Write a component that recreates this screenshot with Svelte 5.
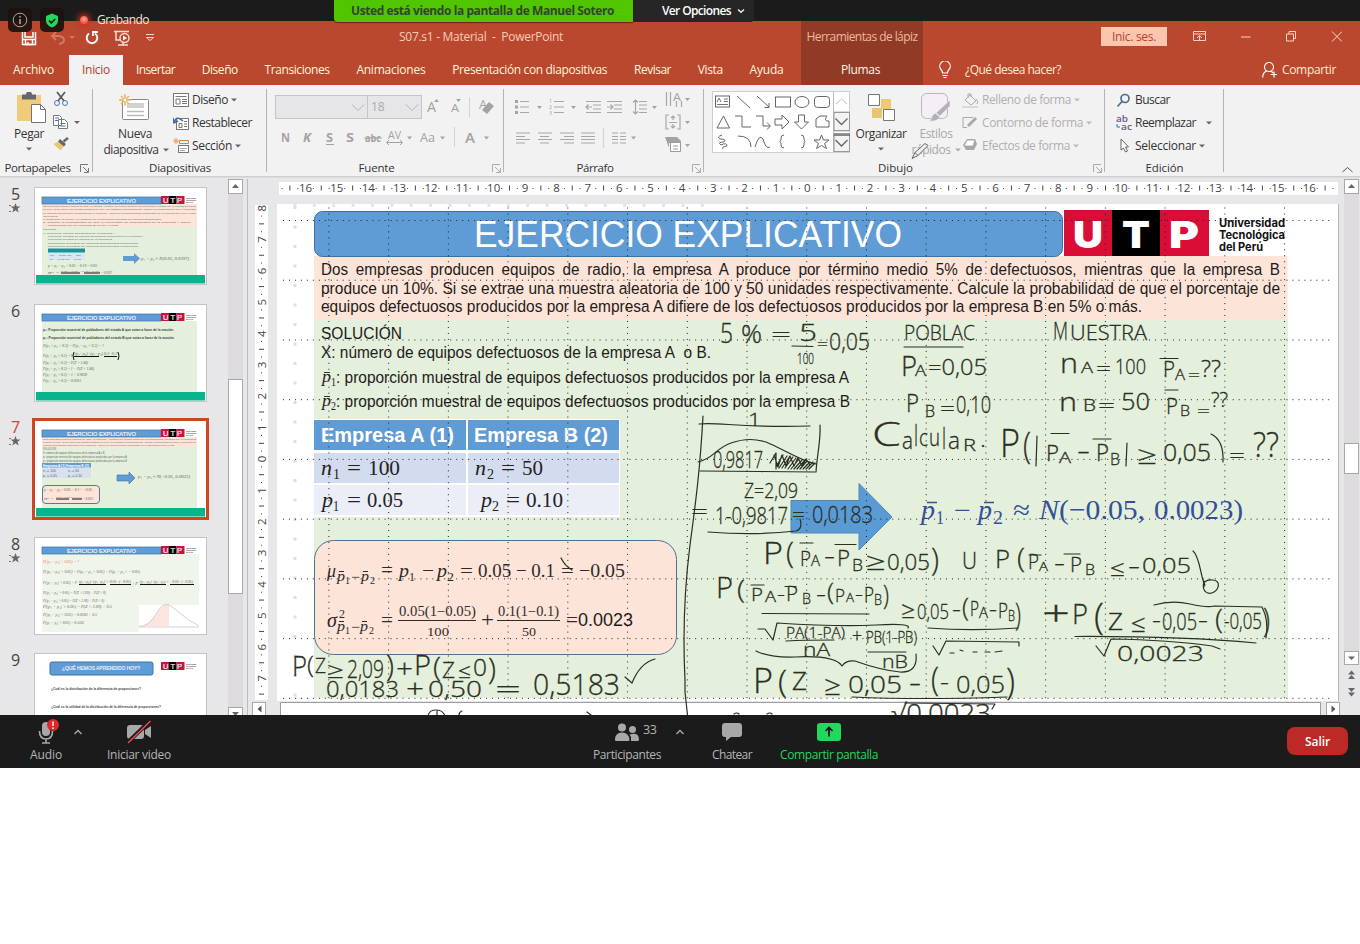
<script>
  // Stretches or tightens the tracking of a label so that it fills the given width.
  function fit(node, width) {
    node.style.letterSpacing = '0px';
    const natural = node.getBoundingClientRect().width;
    const spacing = (width - natural) / node.textContent.length;
    node.style.letterSpacing = spacing + 'px';
  }

  const tabs = [
    ['Insertar', 39], ['Diseño', 36], ['Transiciones', 65], ['Animaciones', 69],
    ['Presentación con diapositivas', 155], ['Revisar', 37], ['Vista', 25], ['Ayuda', 34]
  ];

  const unit = 31.37;
  const range = (a, b) => Array.from({ length: b - a + 1 }, (_, i) => a + i);
  const hNumbers = range(-16, 16);
  const hQuarters = range(-67, 67).filter((q) => q % 4 !== 0);
  const vNumbers = range(-8, 7);
  const vQuarters = range(-31, 30).filter((q) => q % 4 !== 0);
  const gridX = range(0, 16).map((i) => 328.9 + i * 59.73);
  const gridY = range(0, 8).map((i) => 220.5 + i * 59.73);

  // Pen annotations: text, left, baseline, width, size
  const ink = [
    ['5', 720, 343, 13, 27], ['%', 741, 343, 21, 26], ['=', 771, 342, 20, 20], ['5', 799, 341, 18, 23],
    ['100', 797, 364, 17, 15], ['=', 817, 350, 11, 16], ['0,05', 829, 350, 41, 23],
    ['POBLAC', 904, 340, 71, 21], ['P', 901, 376, 16, 28], ['A', 915, 376, 11, 15], ['=0,05', 928, 375, 59, 22],
    ['P', 906, 412, 13, 25], ['B', 925, 417, 10, 16], ['=', 940, 415, 15, 18], ['0,10', 956, 413, 35, 23],
    ['M', 1053, 339, 15, 24], ['UESTRA', 1070, 340, 77, 20],
    ['n', 1060, 373, 18, 27], ['A', 1081, 373, 12, 15], ['=', 1096, 375, 15, 18], ['100', 1115, 374, 31, 20],
    ['P', 1163, 377, 12, 22], ['A', 1175, 380, 10, 14], ['=', 1188, 381, 12, 16], ['??', 1201, 377, 20, 24],
    ['n', 1059, 411, 18, 25], ['B', 1083, 411, 13, 16], ['=', 1098, 412, 17, 18], ['50', 1121, 410, 29, 23],
    ['P', 1166, 414, 12, 22], ['B', 1180, 416, 10, 14], ['=', 1197, 417, 13, 16], ['??', 1211, 407, 17, 20],
    ['C', 872, 446, 29, 33], ['a', 902, 449, 11, 23], ['l', 914, 446, 4, 29], ['c', 919, 446, 9, 23], ['u', 929, 446, 11, 23], ['l', 942, 449, 4, 30], ['a', 948, 449, 12, 23], ['R', 963, 451, 13, 17], ['.', 980, 447, 6, 22],
    ['P', 1000, 457, 20, 38], ['(', 1023, 458, 8, 36], ['P', 1046, 461, 13, 22], ['A', 1059, 463, 12, 15], ['-', 1077, 460, 13, 25],
    ['P', 1096, 461, 13, 23], ['B', 1110, 465, 10, 16], ['≥', 1137, 464, 20, 25],
    ['0,05', 1163, 461, 48, 23], ['=', 1229, 463, 16, 20], ['??', 1253, 457, 26, 35],
    ['1', 748, 426, 13, 19], ['0,9817', 713, 468, 50, 23],
    ['Z=2,09', 744, 498, 54, 20], ['=', 691, 519, 17, 22], ['1-0,9817', 715, 524, 73, 23], ['=', 792, 522, 13, 20], ['0,0183', 812, 523, 61, 24],
    ['P', 763, 564, 20, 32], ['(', 786, 563, 8, 30], ['P', 800, 566, 11, 20], ['A', 811, 566, 9, 14], ['-', 824, 564, 11, 24],
    ['P', 837, 566, 13, 22], ['B', 852, 571, 11, 17], ['≥', 866, 570, 20, 24], ['0,05', 887, 570, 43, 22], [')', 931, 570, 8, 32],
    ['U', 962, 569, 15, 23], ['P', 995, 568, 15, 26], ['(', 1017, 568, 8, 27], ['P', 1028, 569, 11, 20], ['A', 1039, 571, 9, 13], ['-', 1054, 571, 11, 24],
    ['P', 1070, 572, 12, 20], ['B', 1085, 575, 10, 14], ['≤', 1110, 576, 15, 22], ['-', 1128, 574, 12, 23], ['0,05', 1142, 573, 49, 21],
    ['P', 716, 598, 17, 30], ['(', 737, 598, 8, 26], ['P', 751, 601, 12, 18], ['A', 765, 602, 11, 14], ['-', 777, 601, 8, 20], ['P', 786, 601, 12, 20], ['B', 802, 604, 9, 15],
    ['-', 816, 602, 10, 22], ['(', 827, 600, 7, 23], ['P', 835, 602, 10, 19], ['A', 846, 602, 8, 13], ['-', 855, 601, 8, 20], ['P', 864, 602, 10, 20], ['B', 874, 605, 8, 15], [')', 883, 605, 6, 27],
    ['≥', 901, 618, 14, 23], ['0,05', 917, 619, 32, 21], ['-', 952, 617, 9, 22], ['(', 962, 616, 7, 25], ['P', 970, 616, 9, 20], ['A', 979, 618, 9, 14], ['-', 989, 617, 8, 22], ['P', 998, 618, 10, 21], ['B', 1008, 621, 7, 14], [')', 1015, 625, 6, 31],
    ['PA(1-PA)', 786, 638, 59, 15], ['+', 852, 643, 10, 20], ['PB(1-PB)', 866, 643, 51, 17],
    ['nA', 803, 656, 27, 18], ['nB', 882, 668, 26, 19],
    ['P', 753, 693, 20, 35], ['(', 778, 692, 9, 31], ['Z', 792, 690, 15, 25], ['≥', 824, 695, 17, 27], ['0,05', 848, 693, 54, 24], ['-', 909, 692, 12, 25],
    ['(', 931, 691, 8, 33], ['-', 940, 690, 9, 22], ['0,05', 956, 693, 49, 24], [')', 1006, 694, 9, 36],
    ['√0,0023', 891, 722, 100, 25],
    ['+', 1042, 626, 28, 34], ['P', 1072, 624, 16, 28], ['(', 1094, 629, 10, 36], ['Z', 1108, 630, 15, 24], ['≤', 1131, 632, 15, 24], ['-', 1152, 628, 9, 22], ['0,05', 1162, 630, 35, 23], ['-', 1198, 628, 10, 22], ['(', 1215, 629, 8, 28], ['-0,05', 1224, 629, 38, 22], [')', 1263, 632, 7, 33],
    ['0,0023', 1117, 661, 87, 20],
    ['P', 292, 676, 15, 28], ['(', 307, 673, 7, 24], ['Z', 315, 673, 11, 20], ['≥', 327, 678, 17, 22], ['2,09', 347, 678, 37, 26], [')', 386, 676, 8, 30], ['+', 396, 678, 17, 26],
    ['P', 414, 675, 17, 27], ['(', 433, 677, 8, 27], ['Z', 442, 678, 13, 22], ['≤', 458, 678, 13, 20], ['0', 473, 676, 14, 23], [')', 488, 679, 8, 30],
    ['0,0183', 326, 697, 73, 22], ['+', 406, 698, 18, 25], ['0,50', 428, 697, 54, 22], ['=', 495, 698, 26, 26], ['0,5183', 533, 695, 87, 30]
  ];

  // Straight and curved pen marks: fraction bars, roots, brackets, hatching
  const strokes = [
    'M792 346L813 346.500', 'M904 347H963', 'M1160 358.500H1178', 'M1165 390H1178', 'M1051 433.500H1069', 'M1093 439H1111',
    'M1211 434q13 6 12 28', 'M1037 436L1036 466', 'M1127 443L1126 466',
    'M703 416C700 470 696 500 690 545C683 600 683 640 685 680V692L687.500 715', 'M699 424C720 422 740 428 810 426', 'M820 425C821 440 817 455 816 472', 'M700 471L760 471.500L815 472',
    'M698 462C713 459 716 448 731 443S755 439 766 442C781 448 801 461 816 464', 'M708 532C735 534 770 534 796 531Q803 529 800 519',
    'M770 463l6-10l0 16M776 467l7-12M779 468l8-12M782 468l8-12M785 468l8-11M788 469l8-11M791 469l8-10M794 469l8-9M797 469l8-9M800 469l7-8M803 469l7-7M806 469l7-7M809 469l6-6M774 455l4 12l4-12l4 11l4-10l4 10l4-8l4 8l4-7l4 6',
    'M800 543H813', 'M835 544.500H856', 'M1029 555H1041', 'M1064 554H1080', 'M751 585H764', 'M785 586.500H796', 'M1193 551C1200 556 1201 580 1205 585M1204 581c-3 12 5 14 10 11s7-11-1-12s-10 3-9 7',
    'M762 613.500L869 614', 'M928 628C955 630 990 630 1018 628', 'M933 646l6 9l7-14l73 1v4', 'M950 653l4 0M960 650l3 1M973 652l4 0M985 652l5 0M995 652l7-1',
    'M758 629l7 0l8 11l4-17Q840 627 876 625T908 628', 'M786 641Q805 640 834 640', 'M868 652H906',
    'M756 651Q770 658 795 657Q835 655 842 666Q846 660 855 661Q880 670 900 672Q918 673 916 654',
    'M852 697Q920 700 1007 697', 'M905 703L995 704l-3 5', 'M1154 605Q1172 600 1190 604T1214 606L1262 607Q1269 620 1266 638', 'M1075 636.500Q1180 636 1256 643',
    'M1096 646l8 10l7-17Q1170 640 1212 646l8 3', 'M625 677l7 6Q640 663 655 659', 'M561 558q4 8 11 12',
    'M428 716q1-6 8-6t9 6M437 711v5', 'M459 715q0-3 3-4', 'M587 712l4 3', 'M734 714q3-2 5 0M767 714q3-2 5 0'
  ];

  const thumbs = [
    { n: 5, kind: 'a', star: true },
    { n: 6, kind: 'b', star: false },
    { n: 7, kind: 'c', star: true },
    { n: 8, kind: 'd', star: true },
    { n: 9, kind: 'e', star: false }
  ];
</script>

{#snippet st(text, x, y, w, size, cls = '')}
  <text class={cls} {x} {y} font-size={size} textLength={w} lengthAdjust="spacingAndGlyphs">{text}</text>
{/snippet}

{#snippet caret(tone = '#666')}
  <svg class="caret" width="6" height="4" viewBox="0 0 6 4"><path d="M0 .5h6L3 3.500z" fill={tone} /></svg>
{/snippet}

{#snippet launcher(tone)}
  <svg class="launcher" width="9" height="9" viewBox="0 0 9 9" fill="none" stroke={tone}><path d="M.5 8V.5H8M3 3l5 5M8.500 4v4.500H4" /></svg>
{/snippet}

{#snippet thumbHead()}
  <rect x="8" y="10" width="119" height="7" fill="#5f9bd5" stroke="#3973ad" stroke-width=".7" />
  {@render st('EJERCICIO EXPLICATIVO', 33, 15.800, 69, 5.800, 'tw')}
  {@render thumbLogo()}
{/snippet}

{#snippet thumbLogo()}
  <rect x="127" y="9" width="8" height="8" fill="#c8143e" /><rect x="135" y="9" width="7.500" height="8" fill="#000" /><rect x="142.500" y="9" width="8" height="8" fill="#c8143e" />
  {@render st('U T P', 129, 15.500, 19, 6.500, 'tw')}
  {@render st('Universidad', 152, 12, 10, 2.500, 'tt dark')}
  {@render st('Tecnológica', 152, 14.200, 10, 2.500, 'tt dark')}
  {@render st('del Perú', 152, 16.400, 7, 2.500, 'tt dark')}
{/snippet}

<div class="screen">
  <header>
    <div class="share-strip">
      <div class="banner"><span use:fit={263}>Usted está viendo la pantalla de Manuel Sotero</span></div>
      <div class="options">
        <span use:fit={69}>Ver Opciones</span>
        <svg width="8" height="6" viewBox="0 0 8 6" fill="none" stroke="#eee" stroke-width="1.400"><path d="M1 1.500l3 2.700l3-2.700" /></svg>
      </div>
    </div>
    <div class="zoom-badges">
      <i><svg width="16" height="16" viewBox="0 0 16 16" fill="none" stroke="#aaa"><circle cx="8" cy="8" r="6.800" /><path d="M8 7v5M8 4v1.500" stroke-width="1.500" /></svg></i>
      <i><svg width="14" height="15" viewBox="0 0 14 15"><path d="M7 .5l6 2.500v4.500C13 11 10 13.500 7 14.500C4 13.500 1 11 1 7.500V3z" fill="#22d65f" /><path d="M4 7.500l2.300 2.300L10.300 6" fill="none" stroke="#111" stroke-width="1.600" /></svg></i>
      <b></b><span use:fit={52}>Grabando</span>
    </div>
    <div class="titlebar">
      <div class="main">
        <div class="row-title">
          <svg width="160" height="22" viewBox="0 27 160 22" fill="none" stroke="#fff" stroke-width="1.500">
            <path d="M22.500 32v12.500h13V32M25 32v5h8v-5" /><path d="M22 39.500h13.500M25.500 40v4.500h7V40M28 42v3" />
            <path d="M56 32l-4 4l4 4M52 36h7q5 1 5 4t-5 4" stroke="#cf7a63" stroke-width="2" /><path d="M69 36h6l-3 3z" fill="#cf7a63" stroke="none" />
            <path d="M89 33.500a5.300 5.300 0 1 0 6 0" stroke-width="2" /><path d="M93 36v-4h5" stroke-width="1.800" />
            <path d="M114 31.500h15M116 32v8h5M118 45h10M123 42v3" stroke="#f8dccd" /><circle cx="124.500" cy="38" r="4.500" stroke="#f8dccd" /><path d="M123 35.500v5l4-2.500z" fill="#fff" stroke="none" />
            <path d="M146 34.500h8M146.500 37.500h7l-3.500 3z" stroke="#ffd3c0" stroke-width="1" />
          </svg>
          <span class="doc" use:fit={164}>S07.s1 - Material&nbsp; - &nbsp;PowerPoint</span>
        </div>
        <nav>
          <span class="file"><span use:fit={41}>Archivo</span></span>
          <span class="active"><span use:fit={28}>Inicio</span></span>
          <div class="tabs">{#each tabs as [name, w]}<span style:width="{w}px"><span use:fit={w}>{name}</span></span>{/each}</div>
        </nav>
      </div>
      <div class="tools"><div><span use:fit={111}>Herramientas de lápiz</span></div><div class="pl"><span use:fit={39}>Plumas</span></div></div>
      <div class="right">
        <div class="win">
          <span class="login"><span use:fit={44}>Inic. ses.</span></span>
          <svg width="150" height="14" viewBox="1192 30 150 14" fill="none" stroke="#ffd3c4"><path d="M1193.500 31.500h12v9h-12zM1193 34h13M1199.500 40v-4M1197 38l2.500-2.500l2.500 2.500M1241 37h9.500M1286.500 34h7v7h-7zM1289 34v-2.500h6.500v7H1294M1332 31.500l10 10M1342 31.500l-10 10" /></svg>
        </div>
        <div class="ask">
          <svg width="14" height="18" viewBox="0 0 14 18" fill="none" stroke="#fff" stroke-width="1.200"><path d="M4.500 12q0-2-1.500-3.500A5.200 5.200 0 1 1 11 8.500Q9.500 10 9.500 12zM4.500 14.500h5M5.500 16.500h3" /></svg>
          <span use:fit={96}>¿Qué desea hacer?</span>
          <svg class="person" width="16" height="16" viewBox="0 0 16 16" fill="none" stroke="#fff" stroke-width="1.200"><circle cx="7" cy="5" r="4.500" /><path d="M.7 15.500q0-5 4-6.500M9 9l2 2M8.500 12.500h6.500M12 9.500v6" /></svg>
          <span use:fit={54}>Compartir</span>
        </div>
      </div>
    </div>
  </header>

  <section class="ribbon">
    <div class="group clip">
      <div class="body">
        <div class="big paste">
          <svg width="30" height="32" viewBox="0 0 30 32"><rect x="0" y="3" width="24" height="26" fill="#f0ca7d" /><path d="M5 2.500h4a3 3 0 0 1 6 0h4v5H5z" fill="#68666a" /><path d="M14.500 12.500h9l5 5v13h-14z" fill="#fff" stroke="#757275" /><path d="M23.500 12.500v5h5" fill="none" stroke="#757275" /></svg>
          <span use:fit={30}>Pegar</span>{@render caret()}
        </div>
        <svg class="side" width="32" height="62" viewBox="53 91 32 62" fill="none"><path d="M57 92l7 9M65 92l-7 9" stroke="#58565a" stroke-width="1.700" /><circle cx="57" cy="103" r="2.500" stroke="#4b76a5" /><circle cx="65" cy="103" r="2.500" stroke="#4b76a5" /><path d="M53.500 115.500h6l2 2v8h-8zM58.500 119.500h6l3 3v6h-9z" fill="#fff" stroke="#777" /><path d="M55 118h4M55 120.500h3M60.500 123.500h5M60.500 126h5" stroke="#4b76a5" /><path d="M74 121h6l-3 3z" fill="#666" /><path d="M53.500 144l7 6.500l4-5l-6-4z" fill="#e8c772" /><path d="M58 141.500l6 5l2-2.500l-6-5z" fill="#666" /><path d="M63.500 141.500l4.500-3.500" stroke="#666" stroke-width="2.500" /></svg>
      </div>
      <footer><span use:fit={66}>Portapapeles</span>{@render launcher('#777')}</footer>
    </div>

    <div class="group slides">
      <div class="body">
        <div class="big new">
          <svg width="32" height="28" viewBox="0 0 32 28" fill="none"><rect x="3.500" y="5.500" width="26" height="20" fill="#fff" stroke="#888" rx="1" /><rect x="8" y="9" width="17" height="5" fill="#d2d2d2" /><path d="M8 17.500h17M8 21.500h17" stroke="#bbb" stroke-width="1.300" /><path d="M6 0v12M0 6h12M2 2l8 8M10 2l-8 8" stroke="#e5b95f" stroke-width="1.400" /><circle cx="6" cy="6" r="2" fill="#fff" stroke="#e5b95f" /></svg>
          <span use:fit={34}>Nueva</span><div class="line"><span use:fit={55}>diapositiva</span>{@render caret()}</div>
        </div>
        <div class="list">
          <div><svg width="16" height="15" viewBox="0 0 16 15" fill="none" stroke="#777"><rect x=".5" y=".5" width="15" height="13" fill="#fff" /><path d="M2.500 3.500h11M3 6h4v5H3zM9 6.500h5M9 8.500h5M9 10.500h5" /></svg><span use:fit={36}>Diseño</span>{@render caret()}</div>
          <div><svg width="16" height="15" viewBox="0 0 16 15" fill="none" stroke="#777"><rect x="3.500" y="2.500" width="12" height="11" fill="#fff" /><path d="M6 7.500h3v4H6zM11 5.500h3M11 8h3M11 10.500h3" /><path d="M1 6q3-7 9-1M0 2l1 5l4-2" stroke="#3b6ba6" stroke-width="1.500" /></svg><span use:fit={60}>Restablecer</span></div>
          <div><svg width="16" height="15" viewBox="0 0 16 15" fill="none" stroke="#777"><path d="M6.500 2.500h9v3h-9z" stroke="#c98147" /><rect x="5.500" y="7.500" width="10" height="7" fill="#fff" /><path d="M7 10.500h7M7 12.500h5" stroke="#aaa" /><path d="M3 0v6M0 3h6M1 1l4 4M5 1L1 5" stroke="#e6a45f" /></svg><span use:fit={40}>Sección</span>{@render caret()}</div>
        </div>
      </div>
      <footer><span use:fit={62}>Diapositivas</span></footer>
    </div>

    <div class="group font">
      <div class="body col">
        <div class="combo-row">
          <div class="combo name"><svg width="14" height="9" viewBox="0 0 14 9" fill="none" stroke="#b5b3b5"><path d="M1 1.500l6 6l6-6" /></svg></div>
          <div class="combo size"><span>18</span><svg width="14" height="9" viewBox="0 0 14 9" fill="none" stroke="#b5b3b5"><path d="M1 1.500l6 6l6-6" /></svg></div>
          <svg width="74" height="24" viewBox="424 95 74 24" class="gi">{@render st('A', 427, 112, 9, 14)}<path d="M434 102l2.500-3l2.500 3zM456 99h5l-2.500 3z" />{@render st('A', 451, 112, 8, 11.500)}<path d="M469.500 97v20" stroke="#d4d2d4" />{@render st('A', 479, 109, 8, 12)}<path d="M482 110l7-8l5 4l-7 8z" /></svg>
        </div>
        <svg class="fmt gi" width="222" height="26" viewBox="272 125 222 26">
          <g font-weight="bold">{@render st('N', 281, 142, 9, 12.500)}<g font-style="italic">{@render st('K', 303, 142, 8, 12.500)}</g>{@render st('S', 326, 142, 7, 12.500)}{@render st('S', 346, 142, 8, 13)}{@render st('abc', 365, 142, 16, 11)}</g>
          <path d="M326 144.500h8M364 138h18M387 142.500h15M389 140l-2.500 2.500l2.500 2.500M400 140l2.500 2.500l-2.500 2.500" fill="none" stroke="#a5a1a5" />
          {@render st('AV', 388, 139, 13, 11)}{@render st('Aa', 420, 142, 15, 12.500)}<g font-weight="600">{@render st('A', 465, 143, 10, 15)}</g>
          <path d="M454.500 127v20" stroke="#d4d2d4" /><path d="M407 136.500h5l-2.500 3zM440 136.500h5l-2.500 3zM484 136.500h5l-2.500 3z" />
        </svg>
      </div>
      <footer><span use:fit={36}>Fuente</span>{@render launcher('#aaa')}</footer>
    </div>

    <div class="group par">
      <div class="body">
        <svg class="gi" width="190" height="68" viewBox="508 88 190 68">
          <g stroke="#a9a6a9" stroke-width="1.200" fill="none">
            <path d="M520 101.500h9M520 107h9M520 112.500h9M554 101.500h10M554 107h10M554 112.500h10" />
            <path d="M586 101.500h15M593 105h8M593 109h8M586 112.500h15M592 107h-6m2.500-2.500l-2.500 2.500l2.500 2.500M607 101.500h15M614 105h8M614 109h8M607 112.500h15M607 107h6m-2.500-2.500l2.500 2.500l-2.500 2.500" />
            <path d="M639 101.500h8M639 105h8M639 109h8M639 112.500h8M635.500 100v14M633 102.500l2.500-2.500l2.500 2.500M633 111.500l2.500 2.500l2.500-2.500" />
            <path d="M516 133h14M516 136.500h9M516 139.500h14M516 143h9M538 133h14M540 136.500h9M538 139.500h14M540 143h9M560 133h14M564 136.500h10M560 139.500h14M564 143h10M581 133h14M581 136.500h14M581 139.500h14M581 143h14M612 133h6M612 136.500h6M612 139.500h6M612 143h6M620 133h6M620 136.500h6M620 139.500h6M620 143h6" />
            <path d="M666.500 92v14M670.500 92v14M676.500 101v6M681.500 101v6M669 115h-3v14h3M677 115h3v14h-3M673 116v4M671 118l2-2l2 2M673 128v-4M671 126l2 2l2-2M669 122.500h8" /><path d="M603.500 128v20" stroke="#d4d2d4" />
          </g>
          <path d="M515 100h3v3h-3zM515 105.500h3v3h-3zM515 111h3v3h-3zM665 137h12l4 4v2h-12v5z" /><path d="M670.500 142.500h10v9h-10z" fill="#fff" stroke="#999" /><path d="M673 146h5M673 149h5" stroke="#999" />
          {@render st('A', 673, 101, 8, 11)}{@render st('1', 549, 103, 3, 5)}{@render st('2', 549, 109, 3, 5)}{@render st('3', 549, 115, 3, 5)}
          <path d="M537 106h5l-2.500 3zM571 106h5l-2.500 3zM652 106h5l-2.500 3zM685 98h5l-2.500 3zM685 121h5l-2.500 3zM685 144h5l-2.500 3zM631 136.500h5l-2.500 3z" />
        </svg>
      </div>
      <footer><span use:fit={37}>Párrafo</span>{@render launcher('#aaa')}</footer>
    </div>

    <div class="group draw">
      <div class="body">
        <svg class="gallery" width="138" height="62" viewBox="712 91 138 62" fill="none" stroke="#666">
          <rect x="712.500" y="91.500" width="137" height="61" fill="#fff" stroke="#cfcdcf" />
          <path d="M833.500 92v60M834 112h16M834 131h16" stroke="#bbb" /><path d="M834 112.500h15.500v18H834zM834 133.500h15.500v18H834z" fill="#f4f3f4" stroke="#999" />
          <path d="M836 104l5.500-5l5.500 5" stroke="#bbb" /><path d="M835.500 118.500l6 6l6-6M835.500 140l6 6l6-6M834 135h16" stroke-width="1.300" />
          <rect x="715.500" y="96" width="14" height="11" /><path d="M724 99h4M724 101.500h4M717 104.500h11M717 102l2-4l2 4" stroke-width=".9" /><path d="M737 96l13 12M757 96l12 11M769 103v4.500h-4.500" />
          <rect x="775.500" y="97" width="15" height="10" /><ellipse cx="802" cy="102" rx="7" ry="5.500" /><rect x="814.500" y="96.500" width="15" height="11" rx="3" />
          <path d="M717 128l6.500-12l6 12zM735 116h7v11h9M756 116h7v10h7M767 122.500l3.500 3.500l-3.500 3.500M775 119h7v-4l7 7l-7 7v-4h-7zM798.500 115h6v7h4l-7 7l-7-7h4zM816 127v-8l4-3h7q-3 4 0 5h2v6z" />
          <path d="M722 135q-6 2-2 4q7 0 4 3q-7 0-3 3q6-3 6 1q-6 1-4 3M738 136q13 0 13 11M755 147q4-14 8-8q3 11 7 8M784 135q-3 0-3 3v2l-1 1.500l1 1.500v2q0 3 3 3M801 135q3 0 3 3v2l1 1.500l-1 1.500v2q0 3-3 3M821.500 135l2 5h5.500l-4.500 3.500l2 5l-5-3l-5 3l2-5l-4.500-3.500h5.500z" />
        </svg>
        <div class="big org">
          <svg width="28" height="28" viewBox="0 0 28 28"><rect x="13" y="5" width="10" height="10" fill="#f0ca72" /><rect x="4" y="14" width="10" height="10" fill="#e6c76f" /><path d="M.5.5h11v11H.5zM15.500 15.500h11v11h-11z" fill="#fff" stroke="#777" /></svg>
          <span use:fit={51}>Organizar</span>{@render caret()}
        </div>
        <div class="big styles">
          <svg width="32" height="32" viewBox="0 0 32 32"><rect x="1.500" y="1.500" width="26" height="25" rx="5" fill="#f4eff6" stroke="#b9b5ba" /><path d="M30 8v6l-10 10l-4-3zM15 21l5 4q-3 5-11 4q3-1 3-5z" fill="#b4b0b5" stroke="#f4eff6" stroke-width=".6" /></svg>
          <span use:fit={33}>Estilos</span><div class="line"><span use:fit={39}>rápidos</span>{@render caret('#aaa')}</div>
          <svg class="pen" width="20" height="18" viewBox="0 0 20 18" fill="#eee" stroke="#666"><path d="M1 16.500l3-6L14 1.500l3 2l-10 10zM4 10.500l3 3" /></svg>
        </div>
        <div class="list dim">
          <div><svg width="17" height="15" viewBox="0 0 17 15" fill="none" stroke="#aaa"><path d="M3 7l5-5l6 6l-5 4zM6 5V1h3v3M14 6q3 3 1 5" /><path d="M0 14h16" stroke="#ddd6df" stroke-width="2" /></svg><span use:fit={89}>Relleno de forma</span>{@render caret('#bbb')}</div>
          <div><svg width="17" height="15" viewBox="0 0 17 15" fill="none" stroke="#aaa"><path d="M11 1.500H1v10h4M14 4v0" /><path d="M6 10l8-8" stroke-width="3" /></svg><span use:fit={101}>Contorno de forma</span>{@render caret('#bbb')}</div>
          <div><svg width="17" height="15" viewBox="0 0 17 15"><path d="M1 7l4-6h8l2 5l-3 6H4z" fill="#aaa6ab" /><path d="M5 2h8l-2 6H2z" fill="#fff" stroke="#aaa" /></svg><span use:fit={88}>Efectos de forma</span>{@render caret('#bbb')}</div>
        </div>
      </div>
      <footer><span use:fit={35}>Dibujo</span>{@render launcher('#aaa')}</footer>
    </div>

    <div class="group edit">
      <div class="body">
        <div class="list">
          <div><svg width="16" height="15" viewBox="0 0 16 15" fill="none" stroke="#4a6f96" stroke-width="1.700"><circle cx="9" cy="5.500" r="4" /><path d="M6 8.500l-4.500 5" /></svg><span use:fit={35}>Buscar</span></div>
          <div><svg width="16" height="18" viewBox="0 0 16 18" class="ab">{@render st('ab', 0, 8, 12, 9.500)}{@render st('ac', 5, 16, 11, 9.500)}<path d="M1 10v3h3" fill="none" stroke="#3b6ba6" /></svg><span use:fit={61}>Reemplazar</span><em></em>{@render caret()}</div>
          <div><svg width="16" height="15" viewBox="0 0 16 15"><path d="M5 1v11l2.500-2l2 4l2-1l-2-4h3z" fill="#fff" stroke="#666" /></svg><span use:fit={61}>Seleccionar</span>{@render caret()}</div>
        </div>
      </div>
      <footer><span use:fit={38}>Edición</span></footer>
    </div>
    <svg class="collapse" width="11" height="7" viewBox="0 0 11 7" fill="none" stroke="#555"><path d="M.5 6l5-4.500l5 4.500" /></svg>
  </section>

  <main>
    <aside>
      <div class="thumbs">
        {#each thumbs as t}
          <div class="thumb" class:current={t.kind === 'c'}>
            <div class="num"><span>{t.n}</span>
              {#if t.star}<svg width="12" height="10" viewBox="0 0 12 10"><path d="M6.500 0l1.300 3.500h3.700l-3 2.200l1.200 3.800l-3.200-2.200l-3.200 2.200l1.200-3.800l-3-2.200h3.700z" fill="#666" /><path d="M0 2.500h2M0 8.500h2" stroke="#777" /></svg>{/if}
            </div>
            <svg class="mini" width="173" height="98" viewBox="0 0 173 98">
              <rect x=".5" y=".5" width="172" height="97" fill="#fff" stroke="#c4c3c5" />
              {#if t.kind === 'a'}
                <rect x="8" y="17" width="155" height="23" fill="#fce4d8" /><rect x="8" y="40" width="155" height="48" fill="#e4efdc" />{@render thumbHead()}
                {@render st('Dos empresas producen equipos de radio, la empresa A produce por término medio 5% de defectuosos, mientras que la empresa B produce', 9, 20, 153, 2.500, 'tt')}
                {@render st('un 10%. Si se extrae una muestra aleatoria de 100 y 50 unidades respectivamente. Calcule la probabilidad de que el porcentaje', 9, 23, 153, 2.500, 'tt')}
                {@render st('de equipos defectuosos producidos por la empresa A difiere de los defectuosos producidos por la empresa B en 5% o más.', 9, 26.500, 153, 2.500, 'tt')}
                {@render st('respectivamente', 9, 29.500, 15, 2.500, 'tt')}
                {@render st('a.  Determine la media y la varianza de la proporción muestral de equipos defectuosos', 9, 32.500, 118, 2.500, 'tt')}
                {@render st('b.  Calcule la probabilidad de que el porcentaje de defectuosos de la empresa A difiere', 9, 35.500, 148, 2.500, 'tt')}
                {@render st('producidos por la empresa B en 5% o más', 14, 38.500, 70, 2.500, 'tt')}
                {@render st('SOLUCIÓN', 9, 42.500, 13, 2.500, 'tt')}
                {@render st('X: número de equipos defectuosos de la empresa A', 9, 46.500, 72, 2.500, 'tt')}
                {@render st('proporción muestral de equipos defectuosos producidos por la empresa A', 14, 50, 96, 2.500, 'tt')}
                {@render st('proporción muestral de equipos de la empresa B', 14, 53, 64, 2.500, 'tt')}
                {@render st('proporción muestral de equipos defectuosos producidos', 14, 56.500, 90, 2.500, 'tt')}
                {@render st('proporción muestral de equipos defectuosos producidos', 14, 60, 90, 2.500, 'tt')}
                <rect x="14" y="61.500" width="37" height="4" fill="#15949b" /><rect x="14" y="66" width="37" height="7" fill="#dae6f3" />
                {@render st('n₁ = 100       n₂ = 50', 16, 69, 31, 2.500, 'tt')}{@render st('p₁ = 0.05     p₂ = 0.10', 16, 72.500, 31, 2.500, 'tt')}
                <path d="M89 69h11v-3l6 5.500l-6 5.500v-3H89z" fill="#5f9bd5" />{@render st('p̄₁ − p̄₂ ≈ N(0.05, 0.0397)', 107, 73, 48, 4.500, 'tm')}
                {@render st('μ = p₁ − p₂ = 0.05 − 0.10 = 0.05', 14, 80, 49, 3.500, 'tm')}{@render st('σ² =', 14, 87, 12, 3.500, 'tm')}<path d="M27 86h19M50 86h16" stroke="#111" />{@render st('0.05(1−0.05) + 0.10(1−0.10)', 27, 84.500, 38, 2.500, 'tm')}{@render st('= 0.0397', 67, 87, 11, 3, 'tm')}
              {:else if t.kind === 'b'}
                <rect x="8" y="17" width="155" height="71" fill="#e4efdc" />{@render thumbHead()}
                {@render st('p₁: Proporción muestral de pobladores del estado A que votan a favor de la moción.', 9, 27, 131, 3.800, 'tt dark')}
                {@render st('p₂: Proporción muestral de pobladores del estado B que votan a favor de la moción', 9, 35, 131, 3.800, 'tt dark')}
                {@render st('P(p̄₁ > p̄₂ + 0.2) = P(p̄₁ − p̄₂ > 0.2) = ?', 9, 43, 61, 4.500, 'tm')}
                {@render st('P(p̄₁ − p̄₂ > 0.2) = P', 9, 53, 30, 4, 'tm')}<path d="M40 52.500h25M70 52.500h13M40 48q-2 4 0 8M84 48q2 4 0 8" stroke="#111" fill="none" />{@render st('(p̄₁−p̄₂)−(p₁−p₂)   0.2−0.1', 41, 51, 42, 3.500, 'tm')}
                {@render st('P(p̄₁ − p̄₂ > 0.2) = P(Z > 1.88)', 9, 60, 45, 4, 'tm')}{@render st('P(p̄₁ − p̄₂ > 0.2) = 1 − P(Z < 1.88)', 9, 66, 51, 4, 'tm')}{@render st('P(p̄₁ − p̄₂ > 0.2) = 1 − 0.9699', 9, 72, 44, 4, 'tm')}{@render st('P(p̄₁ − p̄₂ > 0.2) = 0.0301', 9, 78, 38, 4, 'tm')}
              {:else if t.kind === 'c'}
                <rect x="8" y="17" width="155" height="10" fill="#fce4d8" /><rect x="8" y="27" width="155" height="61" fill="#e4efdc" />{@render thumbHead()}
                {@render st('Dos empresas producen equipos de radio, la empresa A produce por término medio 5% de defectuosos, mientras que la empresa B', 9, 20, 153, 2.500, 'tt')}
                {@render st('produce un 10%. Si se extrae una muestra aleatoria de 100 y 50 unidades respectivamente. Calcule la probabilidad de que el porcentaje de', 9, 23, 153, 2.500, 'tt')}
                {@render st('equipos defectuosos producidos por la empresa A difiere de los defectuosos producidos por la empresa B en 5% o más.', 9, 26.200, 132, 2.500, 'tt')}
                {@render st('SOLUCIÓN', 9, 30, 13, 2.800, 'tt')}{@render st('X: número de equipos defectuosos de la empresa A o B.', 9, 33.500, 62, 2.800, 'tt')}
                {@render st('p₁: proporción muestral de equipos defectuosos producidos por la empresa A', 9, 38, 84, 2.800, 'tt')}{@render st('p₂: proporción muestral de equipos defectuosos producidos por la empresa B', 9, 42, 84, 2.800, 'tt')}
                <rect x="8" y="43" width="49" height="4.500" fill="#5f9bd5" />{@render st('Empresa A (1)   Empresa B (2)', 9, 46.500, 46, 3.500, 'tw')}<rect x="8" y="48" width="49" height="10" fill="#d8e1ee" />
                {@render st('n₁ = 100', 9, 52, 13, 2.800, 'tt')}{@render st('n₂ = 50', 34, 52, 11, 2.800, 'tt')}{@render st('p₁ = 0.05', 9, 57, 14, 2.800, 'tt')}{@render st('p₂ = 0.10', 34, 57, 14, 2.800, 'tt')}
                <path d="M83 55h12v-3l6 6l-6 6v-3H83z" fill="#5f9bd5" stroke="#3973ad" stroke-width=".6" />{@render st('p̄₁ − p̄₂ ≈ N(−0.05, 0.0023)', 104, 58, 52, 4.500, 'tm')}
                <rect x="8.500" y="65.500" width="57" height="18" rx="3.500" fill="#fce4d8" stroke="#5f759a" />{@render st('μ = p₁ − p₂ = 0.05 − 0.1 = −0.05', 10, 71, 48, 3.500, 'tm')}{@render st('σ² =', 10, 79.500, 10, 3.500, 'tm')}<path d="M22 79h13M38 79h10" stroke="#111" />{@render st('0.05(1−0.05)  0.1(1−0.1)', 22, 77.500, 26, 2.800, 'tm')}{@render st('= 0.0023', 49, 79.500, 10, 3, 'tm')}
              {:else if t.kind === 'd'}
                <path d="M8 17h157v51h-60v27H8z" fill="#f0f5ec" />{@render thumbHead()}
                {@render st('P(|p̄₁ − p̄₂| > 0.05) = ?', 9, 26, 36, 5, 'tr')}{@render st('P(|p̄₁ − p̄₂| > 0.05) = P(p̄₁ − p̄₂ > 0.05) + P(p̄₁ − p̄₂ < − 0.05)', 9, 36, 97, 4.500, 'tm')}
                {@render st('P(|p̄₁ − p̄₂| > 0.05) = P', 9, 47, 34, 4, 'tm')}<path d="M45 47.500h27M76 47.500h21M106 47.500h26M136 47.500h24" stroke="#111" stroke-width="1.200" />{@render st('(p̄₁−p̄₂)−(p₁−p₂) > 0.05−(−0.05)', 45, 45.500, 52, 3.500, 'tm')}{@render st('+P', 98, 48, 6, 4, 'tm')}{@render st('(p̄₁−p̄₂)−(p₁−p₂) < −0.05−(−0.05)', 106, 45.500, 53, 3.500, 'tm')}
                {@render st('P(|p̄₁ − p̄₂| > 0.05) = P(Z > 2.09) + P(Z < 0)', 9, 56.500, 63, 4, 'tm')}{@render st('P(|p̄₁ − p̄₂| > 0.05) = P(Z > 2.09) + P(Z < 0)', 9, 64.500, 61, 4, 'tm')}{@render st('P(|p̄₁ − p̄₂| > 0.05) = P(Z > 2.09) + 0.5', 9, 71, 69, 4, 'tm')}{@render st('P(|p̄₁ − p̄₂| > 0.05) = 0.0183 + 0.5', 9, 79, 54, 4, 'tm')}{@render st('P(|p̄₁ − p̄₂| > 0.05) = 0.5183', 9, 87, 41, 4, 'tm')}
                <rect x="105" y="68" width="60" height="28" fill="#fff" /><path d="M107 89q8-1 15-12t13-9v21z" fill="#fbe5de" /><path d="M105 89.500q10 0 17-12.500t13-9t12 9t18 12M105 90h60" fill="none" stroke="#c9b9bd" stroke-width=".7" />
              {:else}
                <rect x="16" y="9" width="103" height="13" rx="2" fill="#5f9bd5" stroke="#3973ad" />{@render st('¿QUÉ HEMOS APRENDIDO HOY?', 28, 17, 78, 5.500, 'tw')}{@render thumbLogo()}
                {@render st('¿Cuál es la distribución de la diferencia de proporciones?', 17, 37, 90, 3.800, 'tt dark')}{@render st('¿Cuál es la utilidad de la distribución de la diferencia de proporciones?', 17, 55, 110, 3.800, 'tt dark')}
              {/if}
              {#if t.kind === 'a' || t.kind === 'b' || t.kind === 'c'}<rect x="2" y="88" width="169" height="8.500" fill="#08b48c" />{/if}
            </svg>
          </div>
        {/each}
      </div>
      <svg class="bar" width="20" height="538" viewBox="228 177 20 538"><rect x="228" y="194" width="15" height="521" fill="#dddbde" /><g fill="#fff" stroke="#a9a7a9"><rect x="228.500" y="179.500" width="14" height="14" /><rect x="228.500" y="379.500" width="14" height="214" /><rect x="228.500" y="707.500" width="14" height="14" /></g><path d="M232 188h7l-3.500-4zM232 712h7l-3.500 4z" fill="#666" /><path d="M247.500 179v536" stroke="#bbb" /></svg>
    </aside>

    <svg class="canvas" width="1094" height="538" viewBox="249 177 1094 538">
      <rect x="249" y="177" width="1094" height="538" fill="#e7e6e8" />
      <rect x="279" y="182" width="1059" height="13" fill="#fff" /><rect x="255" y="205" width="13" height="495" fill="#fff" />
      <g class="ruler">
        {#each hNumbers as n}<text x={807.400 + n * unit} y="192">{Math.abs(n)}</text>{/each}
        {#each hQuarters as q}{#if q % 2}<rect x={807 + (q * unit) / 4} y="188" width="1" height="1" />{:else}<rect x={807 + (q * unit) / 4} y="185.500" width="1" height="5" />{/if}{/each}
        {#each vNumbers as n}<text transform="translate(265.500 {459 + n * 31.350}) rotate(-90)">{Math.abs(n)}</text>{/each}
        {#each vQuarters as q}{#if q % 2}<rect x="261" y={458.500 + (q * 31.350) / 4} width="1" height="1" />{:else}<rect x="259" y={458.500 + (q * 31.350) / 4} width="5" height="1" />{/if}{/each}
      </g>
      <rect x="277" y="204" width="1061" height="498" fill="#fff" /><path d="M1338.500 204v498" stroke="#b8b6b9" />
      <path d="M295 206V700" stroke="#dcdde1" stroke-width="3" stroke-dasharray="3 16.500" /><path d="M274 205.500H720" stroke="#e3e4e7" stroke-width="3" stroke-dasharray="3 16.400" />

      <rect x="314" y="256" width="973.500" height="65" fill="#fce4d8" /><rect x="314" y="320" width="974" height="378" fill="#e4efdc" />
      <rect x="314.500" y="211.500" width="748" height="45" rx="8" fill="#5f9bd5" stroke="#41709c" />
      {@render st('EJERCICIO EXPLICATIVO', 474, 247, 428, 36.500, 'h')}
      <rect x="1064" y="210" width="48" height="46" fill="#d90d36" /><rect x="1112" y="210" width="48" height="46" fill="#000" /><rect x="1160" y="210" width="49" height="46" fill="#d90d36" />
      <g class="logo">{@render st('U', 1073, 248, 30, 37)}{@render st('T', 1122, 248, 28, 37)}{@render st('P', 1169, 248, 30, 37)}</g>
      <g class="uni">{@render st('Universidad', 1219, 226.800, 66, 11.200)}{@render st('Tecnológica', 1219, 238.800, 66, 11.200)}{@render st('del Perú', 1219, 250.500, 44, 11.200)}</g>
      <g class="copy">
        <text x="321" y="275" font-size="16" word-spacing="3.600" textLength="959" lengthAdjust="spacingAndGlyphs">Dos empresas producen equipos de radio, la empresa A produce por término medio 5% de defectuosos, mientras que la empresa B</text>
        {@render st('produce un 10%. Si se extrae una muestra aleatoria de 100 y 50 unidades respectivamente. Calcule la probabilidad de que el porcentaje de', 321, 294, 959, 16.300)}
        {@render st('equipos defectuosos producidos por la empresa A difiere de los defectuosos producidos por la empresa B en 5% o más.', 321, 312, 821, 16.300)}
        {@render st('SOLUCIÓN', 321, 339, 81, 16.300)}
        {@render st('X: número de equipos defectuosos de la empresa A\u00a0 o B.', 321, 358, 390, 16.300)}
        {@render st(': proporción muestral de equipos defectuosos producidos por la empresa A', 336, 383, 513, 16.300)}
        {@render st(': proporción muestral de equipos defectuosos producidos por la empresa B', 336, 407, 514, 16.300)}
      </g>
      <g class="math" fill="#222">
        {@render st('p', 322, 382, 9, 17, 'it')}{@render st('1', 331, 386, 5, 12)}{@render st('p', 322, 406, 9, 17, 'it')}{@render st('2', 331, 410, 5, 12)}<path d="M324 372.500h6M324 396.500h6" stroke="#333" />
      </g>
      <rect x="314" y="419" width="306" height="98" fill="#fff" /><path d="M314 420h152v30H314zM468 420h151v30H468z" fill="#5f9bd5" /><path d="M314 453h152v30H314zM468 453h151v30H468z" fill="#d3dcee" /><path d="M314 485h152v30H314zM468 485h151v30H468z" fill="#ebedf7" />
      <g class="th">{@render st('Empresa A (1)', 321, 441.500, 133, 19.500)}{@render st('Empresa B (2)', 474, 441.500, 134, 19.500)}</g>
      <g class="math" fill="#222">
        {@render st('n', 321, 475, 11, 21, 'it')}{@render st('1', 333, 479, 7, 14)}{@render st('=', 347, 475, 14, 21)}{@render st('100', 368, 475, 32, 20.500)}
        {@render st('n', 475, 475, 11, 21, 'it')}{@render st('2', 487, 479, 7, 14)}{@render st('=', 501, 475, 14, 21)}{@render st('50', 522, 475, 21, 20.500)}
        {@render st('p', 322, 507, 11, 21, 'it')}{@render st('1', 333, 511, 6, 14)}{@render st('=', 347, 507, 14, 21)}{@render st('0.05', 367, 507, 36, 20.500)}
        {@render st('p', 481, 507, 11, 21, 'it')}{@render st('2', 492, 511, 7, 14)}{@render st('=', 506, 507, 14, 21)}{@render st('0.10', 526, 507, 37, 20.500)}
      </g>
      <rect x="314.500" y="540.500" width="362" height="114" rx="19" fill="#fce4d8" stroke="#52718c" />
      <g class="math" fill="#33292a">
        {@render st('μ', 327, 577, 9, 19, 'it')}{@render st('p', 337, 581, 8, 14, 'it')}{@render st('1', 345, 584, 5, 10)}{@render st('−', 351, 582, 9, 15)}{@render st('p', 361, 581, 8, 14, 'it')}{@render st('2', 370, 584, 5, 10)}<path d="M339 571.500h5M363 571.500h5" stroke="#33292a" />
        {@render st('=', 381, 577, 12, 20)}{@render st('p', 399, 577, 10, 19, 'it')}{@render st('1', 409, 581, 6, 13)}{@render st('−', 422, 577, 12, 20)}{@render st('p', 437, 577, 10, 19, 'it')}{@render st('2', 447, 581, 7, 13)}
        {@render st('=', 460, 577, 13, 19)}{@render st('0.05 − 0.1', 478, 577, 77, 19)}{@render st('=', 561, 577, 13, 19)}{@render st('−0.05', 579, 577, 46, 19)}
        {@render st('σ', 327, 627, 10, 20, 'it')}{@render st('2', 339, 618, 6, 12)}{@render st('p', 337, 631, 8, 14, 'it')}{@render st('1', 345, 634, 5, 10)}{@render st('−', 351, 632, 9, 15)}{@render st('p', 360, 631, 8, 14, 'it')}{@render st('2', 369, 634, 5, 10)}<path d="M339 621.500h5M362 621.500h5" stroke="#33292a" />{@render st('=', 381, 627, 12, 20)}
        {@render st('0.05(1−0.05)', 399, 616, 77, 14)}{@render st('100', 427, 636, 22, 13)}<path d="M398 620.500h78M497 620.500h63" stroke="#33292a" />{@render st('+', 481, 627, 13, 20)}
        {@render st('0.1(1−0.1)', 498, 616, 61, 14)}{@render st('50', 522, 636, 14, 13)}{@render st('=', 566, 627, 12, 20)}
      </g>
      <g class="copy">{@render st('0.0023', 578, 626, 55, 18)}</g>
      <path d="M791 500.500h68v-17l33 33.500l-33 33v-17H791z" fill="#5b9bd5" stroke="#5189ae" />
      <g class="math" fill="#34509a">
        {@render st('p', 921, 519, 14, 27, 'it')}{@render st('1', 936, 524, 8, 18)}{@render st('−', 954, 519, 17, 26)}{@render st('p', 978, 519, 14, 27, 'it')}{@render st('2', 993, 524, 10, 18)}{@render st('≈', 1013, 519, 17, 27)}{@render st('N', 1039, 519, 20, 27, 'it')}{@render st('(−0.05,', 1059, 519, 86, 28)}{@render st('0.0023)', 1154, 519, 89, 28)}
        <path d="M927 502.500h10M984 502.500h10" stroke="#34509a" stroke-width="1.300" />
      </g>

      <g class="dots">{#each gridX as x}<path d="M{x} 207.500V700" />{/each}{#each gridY as y}<path d="M283 {y}H1334" />{/each}</g>

      <rect x="249" y="701" width="1094" height="14" fill="#e7e6e8" /><path d="M280.500 715v-12.500h1040V715" fill="#fff" stroke="#9e9c9e" />
      <g fill="#fff" stroke="#a9a7a9"><rect x="252.500" y="702.500" width="13" height="14" /><rect x="1326.500" y="702.500" width="13" height="14" /></g><path d="M261.500 705.500v7l-4-3.500zM1331.500 705.500v7l4-3.500z" fill="#555" />

      <g class="ink">
        {#each ink as [s, x, y, w, size]}{@render st(s, x, y, w, size)}{/each}
        {#each strokes as d}<path {d} />{/each}
      </g>
    </svg>

    <svg class="bar" width="17" height="538" viewBox="1343 177 17 538"><rect x="1344" y="194" width="15" height="458" fill="#dddbde" /><g fill="#fff" stroke="#a9a7a9"><rect x="1344.500" y="179.500" width="14" height="14" /><rect x="1344.500" y="443.500" width="14" height="30" /><rect x="1344.500" y="651.500" width="14" height="13" /></g><path d="M1348 188h7l-3.500-4zM1348 656.500h7l-3.500 3.500zM1348 674.500h7l-3.500-4zM1348 679h7l-3.500-4zM1348 688h7l-3.500 4zM1348 692.500h7l-3.500 4z" fill="#666" /></svg>
  </main>

  <div class="meeting">
    <div class="btn audio">
      <svg width="92" height="26" viewBox="0 718 92 26" fill="none"><rect x="42" y="722" width="8" height="14" rx="4" fill="#a8a8a8" /><path d="M39.500 731q0 8 6.500 8t6.500-8M46 739v4M42 743h8" stroke="#a8a8a8" stroke-width="1.600" /><circle cx="53" cy="725" r="6" fill="#e02828" /><path d="M53 721.500v4.500M53 727.500v1.500" stroke="#fff" stroke-width="1.500" /><path d="M74.500 734l3.500-3.500l3.500 3.500" stroke="#aaa" stroke-width="1.400" /></svg>
      <span use:fit={32}>Audio</span>
    </div>
    <div class="btn video">
      <svg width="26" height="26" viewBox="126 718 26 26"><rect x="127" y="725" width="17" height="14" rx="3" fill="#a8a8a8" /><path d="M145 730l6-4v12l-6-4z" fill="#a8a8a8" /><path d="M127 743l23-22" stroke="#1b1b1b" stroke-width="4" /><path d="M128 743l22.500-22" stroke="#f04a50" stroke-width="1.400" /></svg>
      <span use:fit={64}>Iniciar video</span>
    </div>
    <div class="btn people">
      <svg width="120" height="26" viewBox="567 718 120 26"><g fill="#a8a8a8"><circle cx="622" cy="727.500" r="4" /><circle cx="632.500" cy="729.500" r="3.500" /><path d="M615 740q0-7.500 7-7.500t7.500 7.500q0 1-1.500 1H616q-1 0-1-1zM631 741v-4l-1.500-2.500q9-3 9.500 4.500q0 2-1 2z" /></g><text x="643" y="734" font-size="12.500" textLength="14" fill="#b5b5b5">33</text><path d="M676.500 734l3.500-3.500l3.500 3.500" fill="none" stroke="#aaa" stroke-width="1.400" /></svg>
      <span use:fit={68}>Participantes</span>
    </div>
    <div class="btn chat">
      <svg width="22" height="26" viewBox="721 718 22 26"><path d="M725 723h14q3 0 3 3v8q0 3-3 3h-8l-5 4v-4h-1q-3 0-3-3v-8q0-3 3-3z" fill="#a8a8a8" /></svg>
      <span use:fit={40}>Chatear</span>
    </div>
    <div class="btn share">
      <svg width="24" height="26" viewBox="817 718 24 26"><rect x="817" y="723" width="24" height="18" rx="3" fill="#22d85e" /><path d="M829 736.500v-9M825.500 731l3.500-3.500l3.500 3.500" fill="none" stroke="#111" stroke-width="1.700" /></svg>
      <span use:fit={98}>Compartir pantalla</span>
    </div>
    <button><span use:fit={25}>Salir</span></button>
  </div>
</div>

<style>
  :global(body) { margin: 0; background: #fff; }
  .screen { width: 1360px; height: 944px; overflow: hidden; background: #fff; font: 12px/16px 'Open Sans', 'Noto Sans', sans-serif; color: #333; }
  span { display: inline-block; white-space: nowrap; }
  svg { display: block; flex: none; }
  header { position: relative; }
  .share-strip { height: 21px; background: #1b1b1b; padding-left: 334px; display: flex; align-items: flex-start; position: relative; z-index: 1; }
  .banner { width: 299px; height: 22px; background: #4fc600; color: #35442d; font-weight: 700; display: flex; align-items: center; justify-content: center; padding-right: 2px; box-sizing: border-box; border-radius: 0 0 0 4px; box-shadow: 0 1px 1px #642617; }
  .options { height: 22px; width: 121px; box-sizing: border-box; padding-left: 29px; background: #262626; color: #fff; font-weight: 600; display: flex; align-items: center; gap: 6px; border-radius: 0 0 4px 0; }
  .zoom-badges { position: absolute; z-index: 2; left: 8px; top: 8px; display: flex; align-items: center; color: #ffe1d8; }
  .zoom-badges i { width: 24px; height: 24px; margin-right: 8px; border-radius: 5px; background: #1d120fee; display: grid; place-items: center; }
  .zoom-badges b { width: 8px; height: 8px; border-radius: 50%; margin: 0 9px 0 8px; background: radial-gradient(circle at 50% 40%, #ffaba3, #ff5347 60%); box-shadow: 0 0 6px 2px #c93320; }
  .titlebar { display: flex; height: 64px; background: #b9482f; color: #fff; }
  .main { width: 801px; }
  .row-title { height: 34px; display: flex; align-items: center; }
  .row-title svg { margin-top: -1px; }
  .doc { color: #f7cbb7; margin-left: 239px; margin-top: -2px; }
  nav { height: 30px; display: flex; align-items: center; color: #fff4d8; }
  .file { width: 67px; text-align: center; }
  .active { background: #f3f2f3; color: #b0412b; width: 54px; height: 30px; line-height: 30px; text-align: center; margin-left: 2px; }
  .tabs { display: flex; gap: 26.8px; margin-left: 13px; }
  .tools { width: 122px; background: #913a25; text-align: center; color: #efb8a2; }
  .tools div { height: 34px; line-height: 32px; }
  .tools .pl { height: 30px; line-height: 30px; color: #fff4e8; padding-right: 3px; }
  .right { width: 437px; }
  .win { height: 34px; display: flex; align-items: center; padding-left: 178px; color: #b14630; gap: 25px; }
  .win svg { margin-top: -2px; }
  .login { width: 66px; height: 19px; line-height: 19px; text-align: center; background: #fcc5ae; margin-top: -3px; }
  .ask { height: 30px; display: flex; align-items: center; padding-left: 15px; color: #ffead0; }
  .ask span { margin-left: 13px; }
  .ask .person { margin-left: 201px; }
  .ask .person + span { margin-left: 4px; }

  .ribbon { height: 91px; background: #f3f2f3; border-bottom: 1px solid #cfced0; box-shadow: 0 1px #dddcde; display: flex; position: relative; }
  .group { box-sizing: border-box; position: relative; height: 91px; background: linear-gradient(#b5b3b5, #b5b3b5) right 4px / 1px 83px no-repeat; }
  .body { height: 75px; display: flex; box-sizing: border-box; }
  .group footer { height: 16px; line-height: 16px; font-size: 11.5px; display: flex; justify-content: center; position: relative; color: #333; }
  .launcher { position: absolute; right: 3px; top: 4px; }
  .clip .launcher { right: 4px; }
  .clip { width: 93px; } .slides { width: 174px; } .font { width: 237px; } .par { width: 200px; } .draw { width: 401px; } .edit { width: 119px; }
  .clip footer, .par footer, .draw footer, .font footer { padding-right: 18px; }
  .big { display: flex; flex-direction: column; align-items: center; position: relative; }
  .big > svg:first-child { height: 32px; margin-top: 7px; }
  .big > span { margin-top: 2px; }
  .paste { width: 52px; padding-left: 3px; }
  .paste > .caret, .org > .caret { margin-top: 5px; }
  .paste > svg:first-child { margin-left: 5px; }
  .side { margin: 6px 0 0 -2px; }
  .line { display: flex; align-items: center; gap: 4px; }
  .new { width: 72px; margin-left: 6px; }
  .new .line { margin-left: 2px; }
  .list { display: flex; flex-direction: column; padding-top: 4px; }
  .list > div { display: flex; align-items: center; height: 22.8px; }
  .list span { margin-left: 3px; margin-right: 3px; }
  .slides .list { margin-left: 2px; }
  .col { flex-direction: column; }
  .combo-row { display: flex; padding: 10px 0 0 8px; }
  .combo { box-sizing: border-box; height: 24px; border: 1px solid #c6c4c6; background: #e6e5e7; display: flex; align-items: center; justify-content: flex-end; padding-right: 2px; color: #aaa; }
  .name { width: 93px; } .size { width: 54px; border-left: 0; justify-content: space-between; padding-left: 3px; }
  .gi { fill: #a5a1a5; }
  .combo-row .gi { margin-left: 2px; }
  .fmt { margin: 6px 0 0 5px; }
  .par .body { padding: 3px 0 0 4px; }
  .gallery { margin: 6px 0 0 8px; }
  .org { width: 58px; margin-left: 2px; }
  .org > svg:first-child { margin-left: 1px; }
  .styles { width: 52px; color: #aaa6aa; }
  .styles .line { margin-left: 0; }
  .pen { position: absolute; left: 1px; top: 57px; }
  .dim { color: #b1aeb1; }
  .edit .list { padding-left: 11px; }
  .edit em { width: 7px; }
  .ab { fill: #665a7c; font-weight: 600; }
  .collapse { margin: 81px 0 0 118px; }

  main { height: 538px; display: flex; background: #e7e6e8; overflow: hidden; }
  aside { width: 249px; height: 538px; display: flex; overflow: hidden; flex: none; }
  .thumbs { width: 228px; padding-top: 10px; }
  .thumb { display: flex; height: 116.6px; }
  .num { width: 34px; font-size: 16px; line-height: 14px; text-align: center; color: #444; flex: none; }
  .num span { padding-right: 3px; }
  .num svg { margin: 2px 0 0 9px; }
  .current .num { color: #c54a32; }
  .current .mini { outline: 3px solid #cf4526; outline-offset: -1px; }
  .tw { fill: #f2f7ff; font-weight: 400; font-family: 'Liberation Sans', sans-serif; stroke: #f2f7ff; stroke-width: .15; }
  .tt { fill: #666; font-family: 'Liberation Sans', sans-serif; }
  .dark { fill: #444; font-weight: 700; }
  .tm { fill: #606860; font-family: 'Liberation Serif', serif; font-style: italic; }
  .tr { fill: #e8706a; font-family: 'Liberation Serif', serif; font-style: italic; }

  .ruler { fill: #444; font-size: 11.5px; text-anchor: middle; }
  .h { fill: #fff; font-family: 'Liberation Sans', Arial, sans-serif; }
  .logo { fill: #fff; font-family: Inter, sans-serif; font-weight: 900; }
  .uni { fill: #111; font-family: Inter, sans-serif; font-weight: 700; }
  .copy { fill: #1e1b1a; font-family: 'Liberation Sans', Arial, sans-serif; }
  .th { fill: #fff; font-family: 'Liberation Sans', Arial, sans-serif; font-weight: 700; }
  .math { font-family: 'Liberation Serif', 'Times New Roman', serif; }
  .it { font-style: italic; }
  .dots path { fill: none; stroke: #222; stroke-width: 1; stroke-dasharray: 1 4.973; }
  .ink { fill: #293023; font-family: 'Open Sans', sans-serif; font-weight: 300; }
  .ink text { stroke: #293023; stroke-width: .3; }
  .ink path { fill: none; stroke: #293023; stroke-width: 1.2; stroke-linecap: round; stroke-linejoin: round; }

  .meeting { height: 53px; background: #1b1b1b; color: #b5b5b5; display: flex; align-items: flex-start; }
  .btn { display: flex; flex-direction: column; align-items: center; padding-top: 3px; }
  .btn span { margin-top: 3px; }
  .audio { width: 92px; } .video { width: 94px; } .people { width: 120px; margin-left: 381px; } .chat { width: 90px; } .share { width: 104px; color: #22d85e; }
  .meeting button { margin: 12px 12px 0 auto; width: 61px; height: 28px; border: 0; border-radius: 8px; background: #bd2926; color: #fff; font: 600 12px 'Open Sans', sans-serif; padding: 0; }
</style>
